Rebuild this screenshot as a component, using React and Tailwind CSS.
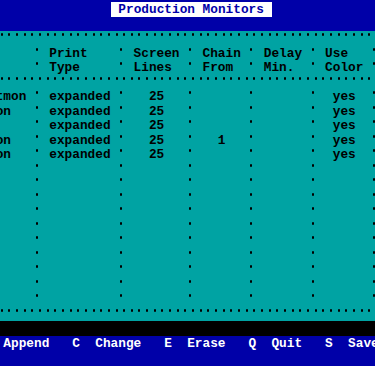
const COLS = 50
const SEPS = [5, 16, 25, 33, 41, 49]

// put strings on a fixed character grid, like the old text-mode screen
// '|' = column separator mark, '~' = horizontal rule mark
function line(items, seps = true) {
  const a = Array(COLS).fill(' ')
  if (seps) SEPS.forEach((c) => (a[c] = '|'))
  items.forEach(([c, s]) => s.split('').forEach((ch, i) => (a[c + i] = ch)))
  return a.join('')
}

const dotted = Array(COLS).fill('~').join('')

const rows = [
  dotted,
  line([[7, 'Print'], [18, 'Screen'], [27, 'Chain'], [35, 'Delay'], [43, 'Use']]),
  line([[7, 'Type'], [18, 'Lines'], [27, 'From'], [35, 'Min.'], [43, 'Color']]),
  dotted,
  line([[0, 'tmon'], [7, 'expanded'], [20, '25'], [44, 'yes']]),
  line([[0, 'on'], [7, 'expanded'], [20, '25'], [44, 'yes']]),
  line([[7, 'expanded'], [20, '25'], [44, 'yes']]),
  line([[0, 'on'], [7, 'expanded'], [20, '25'], [29, '1'], [44, 'yes']]),
  line([[0, 'on'], [7, 'expanded'], [20, '25'], [44, 'yes']]),
  ...Array.from({ length: 10 }, () => line([])),
  dotted,
]

const footer = line(
  [[1, 'Append'], [10, 'C'], [13, 'Change'], [22, 'E'], [25, 'Erase'], [33, 'Q'], [36, 'Quit'], [43, 'S'], [46, 'Save']],
  false
)

function Mark({ rule }) {
  return (
    <span className="inline-block w-[1ch] h-[13.5px] align-top">
      <span className={`block w-[2px] h-[3px] mt-[1px] bg-black rounded-[1px] ${rule ? 'ml-[5px]' : 'ml-[2px]'}`} />
    </span>
  )
}

function Row({ text }) {
  const parts = text.split(/([|~])/)
  return (
    <div className="h-[14.5px] pt-[1px] -ml-[4.33px] leading-[13.5px] whitespace-pre">
      {parts.map((p, i) =>
        p === '|' ? <Mark key={i} /> : p === '~' ? <Mark key={i} rule /> : p
      )}
    </div>
  )
}

export default function App() {
  return (
    <div className="w-[375px] h-[366px] overflow-hidden bg-[#0000a8] font-['Liberation_Mono',monospace] text-[12.78px] leading-[14.5px]">
      {/* title bar */}
      <div className="h-[31px] pt-[2px] bg-[#0000a8]">
        <div className="ml-[110.7px] w-[161px] h-[14.5px] pt-[1px] leading-[13.5px] bg-white text-[#0000a8] font-bold whitespace-pre">
          {' Production Monitors '}
        </div>
      </div>

      {/* table */}
      <div className="h-[290px] bg-[#00a3a3] text-black font-bold">
        {rows.map((r, i) => (
          <Row key={i} text={r} />
        ))}
      </div>

      {/* status strip */}
      <div className="h-[14.5px] bg-black" />

      {/* command keys */}
      <div className="h-[14.5px] pt-[1px] -ml-[4.33px] leading-[13.5px] text-white font-bold whitespace-pre">{footer}</div>
    </div>
  )
}
